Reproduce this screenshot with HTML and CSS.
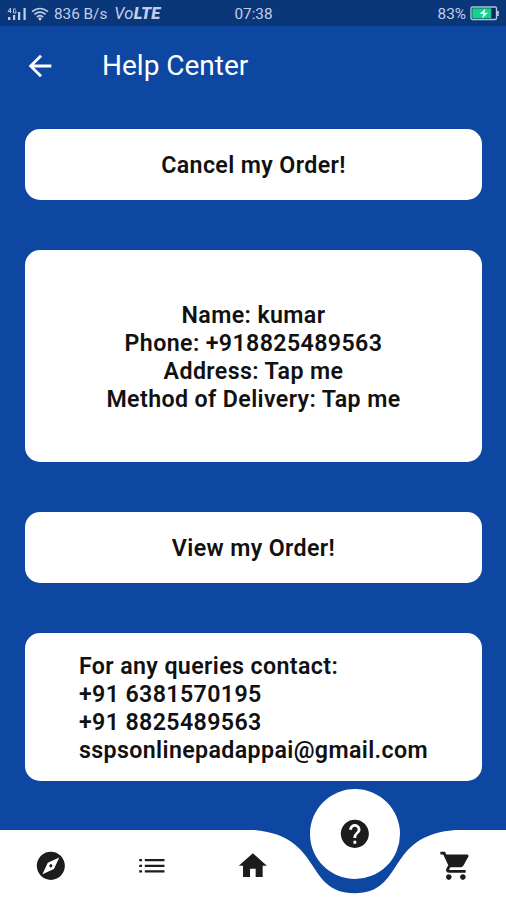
FILE: index.html
```html
<!DOCTYPE html>
<html lang="en">
<head>
<meta charset="utf-8">
<title>Help Center</title>
<link rel="stylesheet" href="styles.css">
</head>
<body>
<div class="screen">
  <div class="status">
    <div class="status-left">
      <svg class="signal" viewBox="0 0 20 14"><path d="M1 10h2.4v3H1zM6 8h2.2v5H6zM11 5h2.2v8H11zM16.5 1h2.2v12h-2.2z"/><path class="thin" d="M3.5 6V1L1 4.5h3.5M9 2H6.5v4H9V4H8"/></svg>
      <svg class="wifi" viewBox="0 0 18 14"><path d="M1 4.6Q9-1.6 17 4.6M3.4 7.4Q9 3 14.6 7.4M5.8 10Q9 7.4 12.2 10"/><circle cx="9" cy="11.8" r="1.6"/></svg>
      <span class="speed">836 B/s</span>
      <span class="volte">Vo<b>LTE</b></span>
    </div>
    <span class="clock">07:38</span>
    <div class="status-right">
      <span class="percent">83%</span>
      <svg class="battery" viewBox="0 0 30 15"><rect class="shell" x="1" y="1" width="25.5" height="12.5" rx="1.5"/><path class="cap" d="M27 5h1.8v5H27z"/><path class="charge" d="M2.3 2.3h19v10h-19z"/><path class="bolt" d="M15.5 2.5 9.5 8h3.7l-1 4.5L18 6.8h-3.5z"/></svg>
    </div>
  </div>
  <header class="bar">
    <svg class="back" viewBox="0 0 24 24"><path d="M20 11H7.83l5.59-5.59L12 4l-8 8 8 8 1.41-1.41L7.83 13H20v-2z"/></svg>
    <h1>Help Center</h1>
  </header>
  <main class="cards">
    <section class="card action">Cancel my Order!</section>
    <section class="card details">
      <p>Name: kumar</p>
      <p>Phone: +918825489563</p>
      <p>Address: Tap me</p>
      <p>Method of Delivery: Tap me</p>
    </section>
    <section class="card action">View my Order!</section>
    <section class="card contact">
      <div>
        <p>For any queries contact:</p>
        <p>+91 6381570195</p>
        <p>+91 8825489563</p>
        <p>sspsonlinepadappai@gmail.com</p>
      </div>
    </section>
  </main>
  <nav class="nav">
    <svg class="nav-shape" viewBox="0 0 506 70"><path d="M0 0H253C323.8 5.3 303.6 63.2 354.6 63.2S384.8 5.3 455.4 0H506V70H0Z"/></svg>
    <div class="tabs">
      <span class="tab"><svg viewBox="0 0 24 24"><path d="M12 10.9c-.61 0-1.1.49-1.1 1.1s.49 1.1 1.1 1.1c.61 0 1.1-.49 1.1-1.1s-.49-1.1-1.1-1.1zM12 2C6.48 2 2 6.48 2 12s4.48 10 10 10 10-4.48 10-10S17.52 2 12 2zm2.19 12.19L6 18l3.81-8.19L18 6l-3.81 8.19z"/></svg></span>
      <span class="tab"><svg class="list" viewBox="0 0 24 24"><path d="M3 12.8h2v-1.6H3zm0 4h2v-1.6H3zm0-8h2V7.2H3zm4 4h14v-1.6H7zm0 4h14v-1.6H7zm0-9.6v1.6h14V7.2z"/></svg></span>
      <span class="tab"><svg viewBox="0 0 24 24"><path d="M10 20v-6h4v6h5v-8h3L12 3 2 12h3v8z"/></svg></span>
      <span class="tab"></span>
      <span class="tab"><svg viewBox="0 0 24 24"><path d="M7 18c-1.1 0-1.99.9-1.99 2S5.9 22 7 22s2-.9 2-2-.9-2-2-2zM1 2v2h2l3.6 7.59-1.35 2.45c-.16.28-.25.61-.25.96 0 1.1.9 2 2 2h12v-2H7.42c-.14 0-.25-.11-.25-.25l.03-.12.9-1.63h7.45c.75 0 1.41-.41 1.75-1.03l3.58-6.49c.08-.14.12-.31.12-.48 0-.55-.45-1-1-1H5.21l-.94-2H1zm16 16c-1.1 0-1.99.9-1.99 2s.89 2 1.99 2 2-.9 2-2-.9-2-2-2z"/></svg></span>
    </div>
    <span class="current"><svg viewBox="0 0 24 24"><path d="M12 2C6.48 2 2 6.48 2 12s4.48 10 10 10 10-4.48 10-10S17.52 2 12 2zm1 17h-2v-2h2v2zm2.07-7.75l-.9.92C13.45 12.9 13 13.5 13 15h-2v-.5c0-1.1.45-2.1 1.17-2.83l1.24-1.26c.37-.36.59-.86.59-1.41 0-1.1-.9-2-2-2s-2 .9-2 2H8c0-2.21 1.79-4 4-4s4 1.79 4 4c0 .88-.36 1.68-.93 2.25z"/></svg></span>
  </nav>
</div>
</body>
</html>
```

FILE: styles.css
```css
* { box-sizing: border-box; }
body { margin: 0; font-family: Roboto, "Liberation Sans", sans-serif; }
h1, p { margin: 0; }
svg { display: block; flex: none; }

.screen {
  width: 506px;
  height: 900px;
  display: flex;
  flex-direction: column;
  background: #0d47a1;
  overflow: hidden;
}

.status {
  height: 26px;
  flex: none;
  display: grid;
  grid-template-columns: 1fr auto 1fr;
  align-items: center;
  padding: 1px 6px 0 7px;
  background: #0a367a;
  color: #c3cee6;
  font-size: 15.3px;
}
.status-left, .status-right { display: flex; align-items: center; }
.status-right { justify-content: flex-end; gap: 4px; }
.signal { width: 20px; height: 14px; fill: #c3cee6; }
.signal .thin { fill: none; stroke: #c3cee6; stroke-width: 0.9; }
.wifi { width: 18px; height: 14px; margin-left: 4px; fill: #c3cee6; }
.wifi path { fill: none; stroke: #c3cee6; stroke-width: 1.7; }
.speed { margin-left: 5px; }
.volte { margin-left: 7px; font-size: 16.5px; font-style: italic; letter-spacing: 0.2px; }
.volte b { font-weight: 900; }
.battery { width: 30px; height: 15px; }
.shell { fill: #07245e; stroke: #b4c3df; stroke-width: 1.4; }
.cap { fill: #b4c3df; }
.charge { fill: #12d58c; }
.bolt { fill: #effff8; }

.bar {
  height: 79px;
  flex: none;
  display: flex;
  align-items: center;
  padding-left: 23px;
  color: #fff;
}
.back { width: 34px; height: 34px; fill: #fff; }
h1 { margin: 0 0 0 45px; font-size: 28px; font-weight: 400; }

.cards {
  flex: none;
  display: flex;
  flex-direction: column;
  gap: 50px;
  padding: 24px 24px 0 25px;
}
.card {
  display: flex;
  flex-direction: column;
  align-items: center;
  justify-content: center;
  padding-top: 1px;
  border-radius: 15px;
  background: #fff;
  color: #111;
  font-size: 23.2px;
  font-weight: 600;
  line-height: 28.1px;
  letter-spacing: 0.38px;
}
.action { height: 71.2px; }
.details { height: 212px; }
.contact { height: 148px; }

.nav { position: relative; flex: none; height: 70px; margin-top: auto; }
.nav-shape { width: 506px; height: 70px; fill: #fff; }
.tabs {
  position: absolute;
  inset: 0;
  display: grid;
  grid-template-columns: repeat(5, 1fr);
  padding-top: 1.2px;
}
.tab { display: flex; align-items: center; justify-content: center; }
.tab svg, .current svg { width: 33.7px; height: 33.7px; fill: #1c1c1c; }
.current {
  position: absolute;
  left: 309.5px;
  top: -41.3px;
  width: 90.5px;
  height: 90.5px;
  display: flex;
  align-items: center;
  justify-content: center;
  border-radius: 50%;
  background: #fff;
}
```
